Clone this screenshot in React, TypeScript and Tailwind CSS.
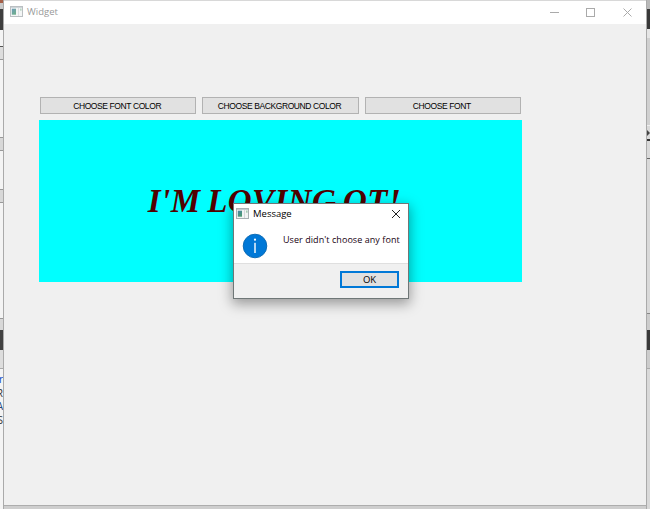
import React from "react";

function AppIcon({ faded = false }: { faded?: boolean }) {
  return (
    <svg width="13" height="11" viewBox="0 0 13 11" className={faded ? "-mt-[2px] shrink-0 opacity-80" : "-mt-px shrink-0"}>
      <defs>
        <linearGradient id="pane" x1="0" y1="0" x2="0.6" y2="1">
          <stop offset="0" stopColor="#4a84a8" />
          <stop offset="1" stopColor="#4a9a72" />
        </linearGradient>
      </defs>
      <rect x="0.5" y="0.5" width="12" height="10" fill="#f2f4f4" stroke="#a9b0b3" />
      <path d="M1 1.5h11" stroke="#c3cbd0" />
      <rect x="1.8" y="2.7" width="4.2" height="6" fill="url(#pane)" />
      <path d="M8.5 2v8" stroke="#d4d8da" />
      <rect x="10" y="2.5" width="1.6" height="2.2" fill="#a5cbb3" />
    </svg>
  );
}

function PushButton({ label }: { label: string }) {
  return (
    <button className="flex h-[17px] flex-1 items-center justify-center border border-[#b2b2b2] bg-[#e1e1e1] pt-px pr-[2px] font-['Liberation_Sans',sans-serif] text-[8.5px] leading-none tracking-[-0.4px] whitespace-nowrap text-black">
      {label}
    </button>
  );
}

function MessageBox() {
  return (
    <div className="absolute top-[203px] left-[233px] flex h-[96px] w-[176px] flex-col border border-[#6f7777] bg-white shadow-[0_4px_12px_1px_rgba(0,0,0,0.36)]">
      <div className="flex h-[20px] shrink-0 items-center pr-[7px] pl-[2px]">
        <AppIcon />
        <span className="-mt-px ml-[4px] flex-1 font-['Open_Sans',sans-serif] text-[9.5px] leading-none text-black">Message</span>
        <svg width="10" height="10" viewBox="0 0 10 10" className="-mt-px">
          <path d="M1 1l8 8M9 1l-8 8" stroke="#222" strokeWidth="1" />
        </svg>
      </div>
      <div className="flex h-[39px] shrink-0">
        <svg width="26" height="26" viewBox="0 0 26 26" className="mt-[9px] ml-[8px] shrink-0">
          <circle cx="13" cy="13" r="11.8" fill="#0078d7" stroke="#0866b0" strokeWidth="0.9" />
          <rect x="12.3" y="9.8" width="1.4" height="10.2" fill="#fff" />
          <circle cx="13" cy="6.7" r="1.1" fill="#fff" />
        </svg>
        <p className="mt-[10px] ml-[15px] font-['Open_Sans',sans-serif] text-[9px] leading-[12px] tracking-[0.06px] whitespace-nowrap text-[#170010]">User didn't choose any font</p>
      </div>
      <div className="flex flex-1 items-start justify-end border-t border-[#dfdfdf] bg-[#f0f0f0] pt-[7px] pr-[9px]">
        <button className="flex h-[17px] w-[59px] items-center justify-center border-2 border-[#0078d7] bg-[#e1e1e1] font-['Open_Sans',sans-serif] text-[9.5px] leading-none text-black">OK</button>
      </div>
    </div>
  );
}

function LeftEdge() {
  return (
    <div className="flex w-[4px] shrink-0 flex-col overflow-hidden border-r border-[#aaa] bg-[#f4f4f4]">
      <div className="h-[3px] shrink-0 bg-[#a55f48]" />
      <div className="h-[6px] shrink-0 bg-[#c9c9c9]" />
      <div className="h-[21px] shrink-0 bg-[#3e3e3e]" />
      <div className="h-[16px] shrink-0" />
      <div className="h-[14px] shrink-0 border-y border-t-[#555] border-b-[#999] bg-[#ddd]" />
      <div className="h-[77px] shrink-0" />
      <div className="h-[14px] shrink-0 border-y border-[#999] bg-[#d8d8d8]" />
      <div className="h-[38px] shrink-0" />
      <div className="h-[14px] shrink-0 border-y border-[#999] bg-[#d8d8d8]" />
      <div className="h-[115px] shrink-0" />
      <div className="h-[12px] shrink-0 border-t border-[#999] bg-[#d8d8d8]" />
      <div className="h-[20px] shrink-0 bg-[#414141]" />
      <div className="h-[19px] shrink-0 border-b border-[#aaa] bg-[#ddd]" />
      <div className="flex flex-col items-end pt-[4px] font-['Open_Sans',sans-serif] text-[10px] leading-[13.7px] text-[#333]">
        <span className="text-[#0645c8]">r</span>
        <span>R</span>
        <span className="text-[#24467c]">A</span>
        <span>S</span>
      </div>
    </div>
  );
}

function RightEdge() {
  return (
    <div className="flex w-[4px] shrink-0 flex-col border-l border-[#aaa] bg-[#d9d9d9]">
      <div className="h-[9px] shrink-0 bg-[#b9b9b9]" />
      <div className="h-[20px] shrink-0 bg-[#393939]" />
      <div className="h-[9px] shrink-0 bg-[#e5e5e5]" />
      <div className="h-[87px] shrink-0 bg-[#d0d0d0]" />
      <div className="flex h-[14px] shrink-0 items-center border-t border-[#eee]">
        <svg width="3" height="6" viewBox="0 0 3 6"><path d="M0 0l3 3-3 3z" fill="#444" /></svg>
      </div>
      <div className="h-[2px] shrink-0 bg-[#333]" />
      <div className="h-[18px] shrink-0 border-b border-[#666]" />
      <div className="h-[154px] shrink-0" />
      <div className="h-[17px] shrink-0 border-t border-[#888] bg-[#ccc]" />
      <div className="h-[20px] shrink-0 bg-[#393939]" />
      <div className="h-[19px] shrink-0 border-b border-[#aaa] bg-[#ccc]" />
    </div>
  );
}

export default function App() {
  return (
    <div className="relative flex h-[509px] w-[650px] overflow-hidden bg-[#dcdcdc]">
      <LeftEdge />
      <div className="flex min-w-0 flex-1 flex-col">
        <div className="h-px shrink-0 bg-[#d8d8d8]" />
        <main className="flex h-[505px] shrink-0 flex-col border-b border-[#adadad] bg-[#f0f0f0]">
          <header className="flex h-[23px] shrink-0 items-center bg-white pl-[6px]">
            <AppIcon faded />
            <span className="-mt-px ml-[4px] flex-1 font-['Open_Sans',sans-serif] text-[9.5px] leading-none text-[#999]">Widget</span>
            <svg width="82" height="10" viewBox="0 0 82 10" className="mr-[14px] -mt-[2px]" fill="none" stroke="#aaa">
              <path d="M0 5.5h9" />
              <rect x="36.5" y="1.5" width="8" height="8" />
              <path d="M73.5 1.5l8 8M81.5 1.5l-8 8" />
            </svg>
          </header>
          <section className="mt-[73px] ml-[35px] w-[483px]">
            <div className="flex gap-[6px] px-px">
              <PushButton label="CHOOSE FONT COLOR" />
              <PushButton label="CHOOSE BACKGROUND COLOR" />
              <PushButton label="CHOOSE FONT" />
            </div>
            <div className="mt-[6px] flex h-[162px] items-center justify-center bg-[#00ffff] pr-[12px]">
              <span className="font-['Liberation_Serif',serif] text-[33px] leading-none font-bold tracking-[0.45px] [word-spacing:-2px] whitespace-nowrap text-[#500000] italic">I'M LOVING OT!</span>
            </div>
          </section>
        </main>
        <div className="flex-1 bg-[#cecece]" />
      </div>
      <RightEdge />
      <MessageBox />
    </div>
  );
}
